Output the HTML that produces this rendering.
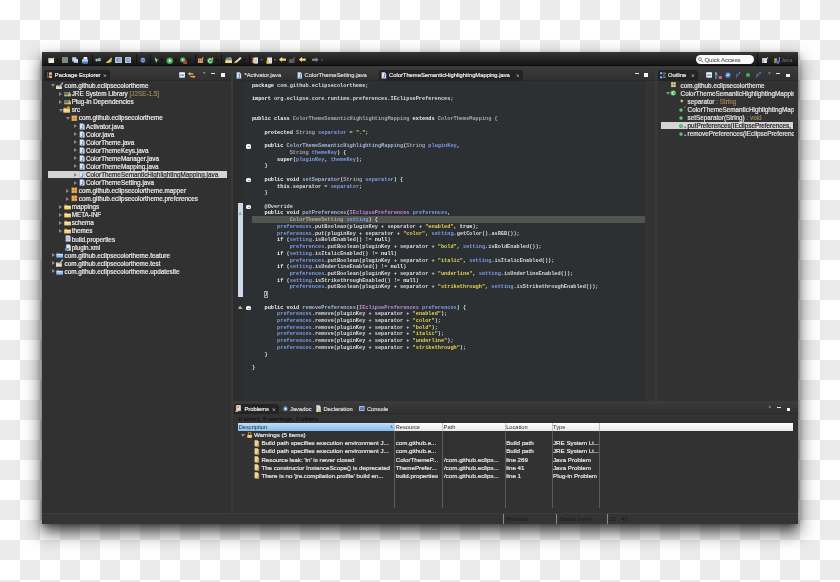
<!DOCTYPE html>
<html><head><meta charset="utf-8"><title>Eclipse</title><style>
*{box-sizing:border-box;margin:0;padding:0}
html,body{width:840px;height:582px;overflow:hidden}
body{position:relative;font-family:"Liberation Sans",sans-serif;background:conic-gradient(#ebebeb 25%,#fff 0 50%,#ebebeb 0 75%,#fff 0) 0 0/40px 40px}
#win{position:absolute;left:42.2px;top:52.3px;width:755.7px;height:471.2px;background:#3a3a3a;box-shadow:0 9px 16px 2px rgba(0,0,0,.5),0 2px 5px rgba(0,0,0,.3),0 9px 10px -3px rgba(0,0,0,.35)}
.layer{position:absolute;left:0;top:0;width:840px;height:582px;will-change:transform}
.r{position:absolute}
i.ic,i.arr{position:absolute;display:block;width:0;height:0}
i.ic{width:5px;height:5px}
.tt{position:absolute;font-size:6.35px;line-height:9px;white-space:nowrap;-webkit-text-stroke:0.2px currentColor}
.sel{position:absolute;background:#d4d4d4}
.cl{position:absolute;left:251.9px;font-weight:bold;font-family:"Liberation Mono",monospace;font-size:5.26px;line-height:6.8px;white-space:pre;color:#dadada}
.tab{position:absolute;font-size:5.8px;line-height:8px;white-space:nowrap;color:#ececec;-webkit-text-stroke:0.2px currentColor}

.pn{position:absolute;background:#323232}
.trow{position:absolute;background:linear-gradient(#3a3a3a,#333 60%,#313131);border-bottom:0.8px solid #2a2a2a}
.tabbg{position:absolute;background:#232323;border-radius:2.5px 2.5px 0 0}
.x{position:absolute;font-size:5.5px;line-height:6px;color:#d0d0d0;font-weight:bold}
.vm{position:absolute;width:3px;height:1.8px;background:#9a9a9a;clip-path:polygon(0 0,100% 0,50% 100%)}
.mn{position:absolute;width:4px;height:1px;background:#e6e6e6}
.mx{position:absolute;width:3.8px;height:3.4px;background:#f4f4f4}
.tbi{position:absolute;display:block}
.dd{position:absolute;width:0;height:0;border-left:1.3px solid transparent;border-right:1.3px solid transparent;border-top:1.6px solid #c8c8c8}
.sep{position:absolute;width:0.8px;background:#2b2b2b}
.otx{position:absolute;font-size:6.35px;line-height:9px;white-space:nowrap;color:#e4e4e4;-webkit-text-stroke:0.2px currentColor}
.ptx{position:absolute;font-size:6.2px;line-height:8px;white-space:nowrap;color:#e6e6e6;-webkit-text-stroke:0.2px currentColor}
.colsep{position:absolute;width:0.9px;background:#5a5a5a}
</style></head><body>
<div id="win"></div>
<div class="layer">
<div class="r" style="left:42.20px;top:52.30px;width:755.70px;height:14.20px;background:linear-gradient(#3a3a3a,#2c2c2c 25%,#1e1e1e 70%,#161616 92%,#0c0c0c 92%)"></div>
<svg style="position:absolute;left:47.90px;top:56.50px;width:6.90px;height:6.50px;" viewBox="0 0 16 16" preserveAspectRatio="none"><rect x="1" y="3" width="13" height="12" fill="#f2f0e4"/><rect x="1" y="3" width="6" height="5" fill="#bcd4ee"/><path d="M12 0l1.2 2.8L16 3.5l-2.8 1.2L12 8l-1.2-3.3L8 3.5l2.8-.7z" fill="#f0c840"/></svg>
<i class="tbi" style="left:56.20px;top:59.20px;width:2.60px;height:1.80px;background:#0a0a0a;clip-path:polygon(0 0,100% 0,50% 100%)"></i>
<svg style="position:absolute;left:61.90px;top:56.80px;width:6.60px;height:6.20px;" viewBox="0 0 16 16" preserveAspectRatio="none"><rect x="0.5" y="0.5" width="15" height="15" fill="#858585" stroke="#9a9a9a"/></svg>
<svg style="position:absolute;left:71.70px;top:56.50px;width:6.60px;height:6.80px;" viewBox="0 0 16 16" preserveAspectRatio="none"><rect x="0.5" y="0.5" width="10" height="10" fill="#c8d8ec"/><rect x="5" y="5" width="10.5" height="10.5" fill="#e8eef6" stroke="#8aa4c8"/><rect x="7" y="10" width="6" height="4" fill="#9ab4d8"/></svg>
<svg style="position:absolute;left:81.60px;top:56.50px;width:6.80px;height:7.00px;" viewBox="0 0 16 16" preserveAspectRatio="none"><path d="M4 0h8l1 6H3z" fill="#f2f2f2"/><path d="M0 6h16v8H0z" fill="#7ea4d8"/><path d="M0 6h16v3H0z" fill="#c4d8f0"/><rect x="3" y="12" width="10" height="4" fill="#3f6fb8"/></svg>
<i class="sep" style="left:92.10px;top:53.50px;width:0.80px;height:12.50px;background:#121212"></i>
<svg style="position:absolute;left:95.40px;top:56.80px;width:6.60px;height:6.00px;" viewBox="0 0 16 16" preserveAspectRatio="none"><path d="M0 8l5-5v3h3v4H5v3z" fill="#b8c8d8"/><circle cx="11" cy="7" r="4.5" fill="#47a556"/><path d="M13 5a3 3 0 1 0 0 4" stroke="#e8ffe8" stroke-width="1.6" fill="none"/></svg>
<svg style="position:absolute;left:105.00px;top:56.80px;width:7.00px;height:6.60px;" viewBox="0 0 16 16" preserveAspectRatio="none"><path d="M1 15L15 1v10q-4 4-14 4z" fill="#e8cf5a"/><path d="M15 1v6L5 13z" fill="#c8c070"/></svg>
<svg style="position:absolute;left:115.00px;top:57.00px;width:7.00px;height:6.40px;" viewBox="0 0 16 16" preserveAspectRatio="none"><rect x="0.5" y="0.5" width="15" height="15" fill="#e4ecf7"/><rect x="3" y="2.5" width="10" height="11" fill="#6e93c9"/><path d="M9.5 4v6q0 2-2 2" stroke="#dfe8f6" stroke-width="1.4" fill="none"/></svg>
<svg style="position:absolute;left:124.80px;top:57.00px;width:6.60px;height:6.40px;" viewBox="0 0 16 16" preserveAspectRatio="none"><rect x="0.5" y="0.5" width="15" height="15" fill="#e4ecf7"/><rect x="3" y="2.5" width="10" height="11" fill="#6e93c9"/><path d="M6 5h5M6 8h5" stroke="#dfe8f6" stroke-width="1.4"/></svg>
<i class="sep" style="left:136.00px;top:53.50px;width:0.80px;height:12.50px;background:#121212"></i>
<svg style="position:absolute;left:139.50px;top:56.80px;width:6.20px;height:6.60px;" viewBox="0 0 16 16" preserveAspectRatio="none"><circle cx="7.5" cy="8" r="6" fill="#8db3e8"/><ellipse cx="7.5" cy="8" rx="6" ry="3" fill="#4e7cc4"/><path d="M12 12l4 4" stroke="#3a5a90" stroke-width="1.5"/></svg>
<i class="sep" style="left:150.00px;top:53.50px;width:0.80px;height:12.50px;background:#121212"></i>
<svg style="position:absolute;left:153.80px;top:57.00px;width:5.70px;height:6.40px;" viewBox="0 0 16 16" preserveAspectRatio="none"><path d="M2 1l13 7-6 1-3 6z" fill="#58a068"/><path d="M2 1l6 5-2 9z" fill="#a8d8b0"/></svg>
<i class="tbi" style="left:160.60px;top:59.20px;width:2.60px;height:1.80px;background:#0a0a0a;clip-path:polygon(0 0,100% 0,50% 100%)"></i>
<svg style="position:absolute;left:165.70px;top:56.50px;width:7.60px;height:7.30px;" viewBox="0 0 16 16" preserveAspectRatio="none"><circle cx="8" cy="8" r="7.5" fill="#2f7f3a"/><circle cx="8" cy="8" r="6" fill="#4fae5a"/><path d="M6 4l5 4-5 4z" fill="#f0fff0"/></svg>
<i class="tbi" style="left:174.40px;top:59.20px;width:2.60px;height:1.80px;background:#0a0a0a;clip-path:polygon(0 0,100% 0,50% 100%)"></i>
<svg style="position:absolute;left:179.50px;top:56.50px;width:7.60px;height:7.50px;" viewBox="0 0 16 16" preserveAspectRatio="none"><circle cx="6" cy="6" r="5.5" fill="#4aa856"/><path d="M4.5 3l3.5 3-3.5 3z" fill="#e8ffe8"/><path d="M7 10h9v6H7z" fill="#c83a3a"/><path d="M9 10v-2h5v2" stroke="#d86060" fill="none"/></svg>
<i class="tbi" style="left:188.20px;top:59.20px;width:2.60px;height:1.80px;background:#0a0a0a;clip-path:polygon(0 0,100% 0,50% 100%)"></i>
<i class="sep" style="left:194.60px;top:53.50px;width:0.80px;height:12.50px;background:#121212"></i>
<svg style="position:absolute;left:197.90px;top:57.20px;width:6.10px;height:6.10px;" viewBox="0 0 16 16" preserveAspectRatio="none"><rect x="0" y="4" width="13" height="12" fill="#e0a866"/><path d="M4 4v12M9 4v12M0 9h13" stroke="#8a5a2a" stroke-width="1"/><path d="M13 0l1 2 2 .5-2 1-1 2.5-1-2.5-2-1 2-.5z" fill="#f8e070"/></svg>
<svg style="position:absolute;left:207.00px;top:56.60px;width:7.00px;height:7.00px;" viewBox="0 0 16 16" preserveAspectRatio="none"><circle cx="7.5" cy="8.5" r="7" fill="#3b9a4c"/><path d="M10.5 6a4 4 0 1 0 0 5" stroke="#e0ffe0" stroke-width="2" fill="none"/><path d="M13 0l1 2 2 .5-2 1-1 2.5-1-2.5-2-1 2-.5z" fill="#f0d060"/></svg>
<i class="tbi" style="left:215.20px;top:59.20px;width:2.60px;height:1.80px;background:#0a0a0a;clip-path:polygon(0 0,100% 0,50% 100%)"></i>
<i class="sep" style="left:220.80px;top:53.50px;width:0.80px;height:12.50px;background:#121212"></i>
<svg style="position:absolute;left:224.60px;top:56.80px;width:7.40px;height:6.40px;" viewBox="0 0 16 16" preserveAspectRatio="none"><path d="M1 6h14v9H1z" fill="#e8b650"/><path d="M1 9h14v6H1z" fill="#f8d880"/><path d="M3 1h10l2 5H1z" fill="#6a86d6"/><path d="M8 1h5l2 5H8z" fill="#58b870"/></svg>
<svg style="position:absolute;left:234.00px;top:56.80px;width:7.70px;height:6.80px;" viewBox="0 0 16 16" preserveAspectRatio="none"><path d="M0 15l3-5L13 0l3 3L6 13z" fill="#efe2c8"/><path d="M0 15l3-5 3 3z" fill="#c8a870"/></svg>
<i class="tbi" style="left:242.70px;top:59.20px;width:2.60px;height:1.80px;background:#0a0a0a;clip-path:polygon(0 0,100% 0,50% 100%)"></i>
<i class="sep" style="left:248.60px;top:53.50px;width:0.80px;height:12.50px;background:#121212"></i>
<svg style="position:absolute;left:251.70px;top:56.60px;width:6.70px;height:7.00px;" viewBox="0 0 16 16" preserveAspectRatio="none"><rect x="4" y="1" width="11" height="14" fill="#dfe6f0"/><path d="M6 5h7M6 8h7M6 11h7" stroke="#9ab0cc"/><circle cx="3.5" cy="4" r="2.5" fill="#f2c23e"/><path d="M1 7h5v6H1z" fill="#f2c23e"/></svg>
<i class="tbi" style="left:260.40px;top:59.20px;width:2.60px;height:1.80px;background:#707070;clip-path:polygon(0 0,100% 0,50% 100%)"></i>
<svg style="position:absolute;left:265.50px;top:56.60px;width:6.70px;height:7.00px;" viewBox="0 0 16 16" preserveAspectRatio="none"><rect x="3" y="1" width="12" height="14" fill="#dfe6f0"/><path d="M1 8h6v7H1z" fill="#f2c23e"/><path d="M4 3v12" stroke="#f2c23e" stroke-width="2.5"/></svg>
<i class="tbi" style="left:273.50px;top:59.20px;width:2.60px;height:1.80px;background:#707070;clip-path:polygon(0 0,100% 0,50% 100%)"></i>
<svg style="position:absolute;left:279.00px;top:57.40px;width:7.20px;height:5.40px;" viewBox="0 0 16 16" preserveAspectRatio="none"><path d="M0 8l7-7v4h9v6H7v4z" fill="#f5d660"/><path d="M0 8l7-7v4h9v2H6z" fill="#fff0b0"/></svg>
<svg style="position:absolute;left:289.00px;top:57.00px;width:6.70px;height:6.40px;" viewBox="0 0 16 16" preserveAspectRatio="none"><rect x="0" y="5" width="13" height="11" fill="#5e5e5e"/><path d="M12 0l1 2 2.5.5-2.5 1-1 2.5-1-2.5L8.5 2.5 11 2z" fill="#808080"/></svg>
<svg style="position:absolute;left:299.00px;top:57.40px;width:6.70px;height:5.40px;" viewBox="0 0 16 16" preserveAspectRatio="none"><path d="M0 8l7-7v4h9v6H7v4z" fill="#f5d660"/><path d="M0 8l7-7v4h9v2H6z" fill="#fff0b0"/></svg>
<i class="tbi" style="left:307.30px;top:59.20px;width:2.60px;height:1.80px;background:#0a0a0a;clip-path:polygon(0 0,100% 0,50% 100%)"></i>
<svg style="position:absolute;left:312.40px;top:57.40px;width:6.60px;height:5.40px;" viewBox="0 0 16 16" preserveAspectRatio="none"><path d="M16 8L9 1v4H0v6h9v4z" fill="#8a8a8a"/></svg>
<i class="tbi" style="left:320.70px;top:59.20px;width:2.60px;height:1.80px;background:#6a6a6a;clip-path:polygon(0 0,100% 0,50% 100%)"></i>
<div class="r" style="left:695.90px;top:55.20px;width:58.30px;height:8.90px;background:#fafafa;border-radius:4.5px"></div>
<svg style="position:absolute;left:698.30px;top:57.00px;width:5.50px;height:5.80px;" viewBox="0 0 16 16" preserveAspectRatio="none"><circle cx="6" cy="6" r="4.3" stroke="#555" stroke-width="1.8" fill="none"/><path d="M9.2 9.2L15 15" stroke="#555" stroke-width="2.2"/></svg>
<div class="r" style="left:704.4px;top:55.8px;font-size:6px;line-height:8.5px;color:#6a6a6a;white-space:nowrap;-webkit-text-stroke:0.15px #6a6a6a">Quick Access</div>
<i class="sep" style="left:757.20px;top:52.50px;width:0.90px;height:14.00px;background:#0e0e0e"></i>
<svg style="position:absolute;left:762.00px;top:57.00px;width:6.60px;height:6.20px;" viewBox="0 0 16 16" preserveAspectRatio="none"><rect x="0" y="3" width="12" height="13" fill="#dfe6f0"/><rect x="1" y="6" width="4" height="9" fill="#8fb0e0"/><path d="M13 0l1 2 2 .5-2 1-1 2.5-1-2.5-2-1 2-.5z" fill="#f8d860"/></svg>
<svg style="position:absolute;left:773.80px;top:56.60px;width:6.60px;height:7.00px;" viewBox="0 0 16 16" preserveAspectRatio="none"><rect x="1" y="3" width="6" height="6" fill="#d8a850"/><rect x="0" y="8" width="7" height="6" fill="#52a866"/><circle cx="9.5" cy="12" r="4" fill="#6a5ac0"/><path d="M13 0v8q0 2-2 2" stroke="#90b8f0" stroke-width="2" fill="none"/></svg>
<div class="r" style="left:781.2px;top:56px;font-size:5.3px;line-height:8px;color:#707070;white-space:nowrap">Java</div>
<div class="pn" style="left:42.40px;top:69.00px;width:188.60px;height:444.00px;background:#313131;border-radius:0 3px 0 0"></div>
<div class="trow" style="left:42.40px;top:69.00px;width:188.60px;height:11.90px;border-radius:0 3px 0 0"></div>
<div class="pn" style="left:233.20px;top:69.00px;width:421.60px;height:331.80px;border-radius:3px 3px 0 0"></div>
<div class="trow" style="left:233.20px;top:69.00px;width:421.60px;height:11.90px;border-radius:3px 3px 0 0"></div>
<div class="r" style="left:233.20px;top:80.90px;width:9.80px;height:319.90px;background:#2e2d2d"></div>
<div class="r" style="left:243.00px;top:80.90px;width:402.00px;height:319.90px;background:#2c3033"></div>
<div class="r" style="left:645.00px;top:80.90px;width:9.80px;height:319.90px;background:#333"></div>
<div class="pn" style="left:657.00px;top:69.00px;width:140.90px;height:331.80px;border-radius:3px 0 0 0"></div>
<div class="trow" style="left:657.00px;top:69.00px;width:140.90px;height:11.90px;border-radius:3px 0 0 0"></div>
<div class="pn" style="left:233.20px;top:403.20px;width:564.70px;height:109.80px;border-radius:3px 0 0 0"></div>
<div class="trow" style="left:233.20px;top:403.20px;width:564.70px;height:11.00px;border-radius:3px 0 0 0"></div>
<div class="r" style="left:42.20px;top:513.00px;width:755.70px;height:10.50px;background:#343434;border-top:0.8px solid #3e3e3e"></div>
<i class="tbi" style="left:503.10px;top:514.00px;width:0.90px;height:9.50px;background:#8a8a8a"></i>
<i class="tbi" style="left:556.40px;top:514.00px;width:0.90px;height:9.50px;background:#8a8a8a"></i>
<i class="tbi" style="left:606.80px;top:514.00px;width:0.90px;height:9.50px;background:#8a8a8a"></i>
<div class="r" style="left:505.7px;top:515px;font-size:6.1px;line-height:8px;color:#1c1c1c;white-space:nowrap">Writable</div>
<div class="r" style="left:559.2px;top:515px;font-size:6.1px;line-height:8px;color:#1c1c1c;white-space:nowrap">Smart Insert</div>
<div class="r" style="left:609.5px;top:515px;font-size:6.1px;line-height:8px;color:#1c1c1c;white-space:nowrap">21 : 41</div>
<div class="tabbg" style="left:44.30px;top:70.00px;width:65.70px;height:10.90px;"></div>
<svg style="position:absolute;left:46.80px;top:72.00px;width:5.60px;height:6.40px;" viewBox="0 0 16 16" preserveAspectRatio="none"><path d="M1.2 0v16" stroke="#8a8a8a" stroke-width="1.6"/><rect x="5" y="0.5" width="10" height="7" rx="2" fill="#c89a6a"/><rect x="5" y="8.5" width="10" height="7" rx="2" fill="#c89a6a"/><rect x="7" y="2" width="6" height="4" fill="#e0c0a0"/><rect x="7" y="10" width="6" height="4" fill="#e0c0a0"/></svg>
<div class="tab" style="left:54.8px;top:71.2px">Package Explorer</div>
<svg style="position:absolute;left:103.10px;top:73.70px;width:3.80px;height:3.40px;" viewBox="0 0 16 16" preserveAspectRatio="none"><path d="M2 2L14 14M14 2L2 14" stroke="#e4e4e4" stroke-width="2.6"/></svg>
<svg style="position:absolute;left:178.90px;top:72.00px;width:6.20px;height:6.00px;" viewBox="0 0 16 16" preserveAspectRatio="none"><rect x="0.5" y="0.5" width="15" height="15" rx="2" fill="#dce8f6"/><rect x="3" y="7" width="10" height="2.6" fill="#4a78b8"/><path d="M1 3h14" stroke="#f8fbff" stroke-width="2"/></svg>
<svg style="position:absolute;left:188.00px;top:72.00px;width:7.50px;height:6.60px;" viewBox="0 0 16 16" preserveAspectRatio="none"><path d="M0 4.5L4.5 0v3H11v3H4.5v3z" fill="#f0c850"/><path d="M16 11.5L11.5 7v3H5v3h6.5v3z" fill="#e8b038"/></svg>
<i class="vm" style="left:202.70px;top:72.20px"></i><i class="mn" style="left:211.00px;top:73.20px"></i><i class="mx" style="left:221.00px;top:73.30px"></i>
<svg style="position:absolute;left:236.40px;top:71.80px;width:5.80px;height:6.80px;" viewBox="0 0 16 16" preserveAspectRatio="none"><path d="M2 0.5h8l4 4V15.5H2z" fill="#e3eaf3" stroke="#7d95b8" stroke-width="1"/><path d="M9.5 4v7.5q0 2-2 2h-2" stroke="#3a6fc4" stroke-width="2.2" fill="none"/></svg>
<div class="tab" style="left:244.4px;top:71.2px;color:#dcdcdc">*Activator.java</div>
<svg style="position:absolute;left:296.60px;top:71.80px;width:5.80px;height:6.80px;" viewBox="0 0 16 16" preserveAspectRatio="none"><path d="M2 0.5h8l4 4V15.5H2z" fill="#e3eaf3" stroke="#7d95b8" stroke-width="1"/><path d="M9.5 4v7.5q0 2-2 2h-2" stroke="#3a6fc4" stroke-width="2.2" fill="none"/></svg>
<div class="tab" style="left:304.6px;top:71.2px;color:#dcdcdc">ColorThemeSetting.java</div>
<div class="tabbg" style="left:379.30px;top:70.00px;width:143.40px;height:10.90px;"></div>
<svg style="position:absolute;left:381.40px;top:71.80px;width:5.80px;height:6.80px;" viewBox="0 0 16 16" preserveAspectRatio="none"><path d="M2 0.5h8l4 4V15.5H2z" fill="#e3eaf3" stroke="#7d95b8" stroke-width="1"/><path d="M9.5 4v7.5q0 2-2 2h-2" stroke="#3a6fc4" stroke-width="2.2" fill="none"/></svg>
<div class="tab" style="left:389px;top:71.2px">ColorThemeSemanticHighlightingMapping.java</div>
<svg style="position:absolute;left:515.70px;top:73.70px;width:3.80px;height:3.40px;" viewBox="0 0 16 16" preserveAspectRatio="none"><path d="M2 2L14 14M14 2L2 14" stroke="#e4e4e4" stroke-width="2.6"/></svg>
<i class="mn" style="left:634.5px;top:73.4px"></i><i class="mx" style="left:644.2px;top:73.4px"></i>
<div class="tabbg" style="left:657.60px;top:70.00px;width:40.00px;height:10.90px;"></div>
<svg style="position:absolute;left:659.70px;top:72.00px;width:6.10px;height:6.50px;" viewBox="0 0 16 16" preserveAspectRatio="none"><rect x="0" y="0" width="6" height="6" fill="#4a8ad8"/><rect x="0" y="10" width="6" height="6" fill="#4a8ad8"/><rect x="1.5" y="1.5" width="3" height="3" fill="#bcd8f8"/><rect x="1.5" y="11.5" width="3" height="3" fill="#bcd8f8"/><path d="M8 3h8M8 8h5M8 13h8" stroke="#d8e4f0" stroke-width="1.6"/></svg>
<div class="tab" style="left:667.9px;top:71.2px">Outline</div>
<svg style="position:absolute;left:690.90px;top:73.70px;width:3.80px;height:3.40px;" viewBox="0 0 16 16" preserveAspectRatio="none"><path d="M2 2L14 14M14 2L2 14" stroke="#e4e4e4" stroke-width="2.6"/></svg>
</div>
<div class="layer" style="clip-path:inset(81px 609px 89px 43px)">
<i class="arr" style="left:51.3px;top:84.3px;border-left:2px solid transparent;border-right:2px solid transparent;border-top:3px solid #8a8a8a"></i>
<svg class="sv" style="position:absolute;left:55.70px;top:81.70px;width:7.6px;height:7.6px" viewBox="0 0 16 16"><path d="M0 7h5l1 1h6v8H0z" fill="#c9a560"/><path d="M0 9h12v7H0z" fill="#efdcae"/><path d="M6 11L15 1" stroke="#86b2ee" stroke-width="3"/><path d="M6 11l-1 2 2-1z" fill="#fff"/></svg>
<div class="tt" style="left:64.5px;top:81.20px;color:#ececec">com.github.eclipsecolortheme</div>
<i class="arr" style="left:59.3px;top:91.8px;border-top:2px solid transparent;border-bottom:2px solid transparent;border-left:3px solid #8a8a8a"></i>
<svg class="sv" style="position:absolute;left:63.90px;top:90.17px;width:7.4px;height:7.2px" viewBox="0 0 16 16"><rect x="0" y="5" width="11" height="3.5" fill="#48a7bf"/><rect x="0" y="8.5" width="11" height="1.5" fill="#2a5a70"/><rect x="0" y="10" width="11" height="4" fill="#e0a449"/><path d="M9 14L12.5 3 16 14z" fill="#f2c44c"/></svg>
<div class="tt" style="left:71.7px;top:89.27px;color:#ececec">JRE System Library<span style="color:#9c8456"> [J2SE-1.5]</span></div>
<i class="arr" style="left:59.3px;top:99.8px;border-top:2px solid transparent;border-bottom:2px solid transparent;border-left:3px solid #8a8a8a"></i>
<svg class="sv" style="position:absolute;left:63.90px;top:98.24px;width:7.4px;height:7.2px" viewBox="0 0 16 16"><rect x="0" y="5" width="11" height="3.5" fill="#48a7bf"/><rect x="0" y="8.5" width="11" height="1.5" fill="#2a5a70"/><rect x="0" y="10" width="11" height="4" fill="#e0a449"/><path d="M9 14L12.5 3 16 14z" fill="#f2c44c"/></svg>
<div class="tt" style="left:71.7px;top:97.34px;color:#ececec">Plug-in Dependencies</div>
<i class="arr" style="left:58.5px;top:108.5px;border-left:2px solid transparent;border-right:2px solid transparent;border-top:3px solid #8a8a8a"></i>
<svg class="sv" style="position:absolute;left:63.30px;top:106.11px;width:7.4px;height:7.4px" viewBox="0 0 16 16"><path d="M1 4h5l1.5 1.5H15V14H1z" fill="#d9a94a"/><path d="M1 7h14v7H1z" fill="#f3d58a"/><path d="M1 7h14v1.5H1z" fill="#fff1c8"/><rect x="8" y="1" width="7" height="6" fill="#b07a3a"/><path d="M11.5 1v6M8 4h7" stroke="#f0c070" stroke-width="1"/></svg>
<div class="tt" style="left:71.7px;top:105.41px;color:#ececec">src</div>
<i class="arr" style="left:65.6px;top:116.6px;border-left:2px solid transparent;border-right:2px solid transparent;border-top:3px solid #8a8a8a"></i>
<svg class="sv" style="position:absolute;left:71.20px;top:114.58px;width:6.6px;height:6.6px" viewBox="0 0 16 16"><rect x="1" y="1" width="14" height="14" fill="#a8672e"/><rect x="2" y="2" width="5.5" height="5.5" fill="#f0b45e"/><rect x="8.5" y="2" width="5.5" height="5.5" fill="#f0b45e"/><rect x="2" y="8.5" width="5.5" height="5.5" fill="#f0b45e"/><rect x="8.5" y="8.5" width="5.5" height="5.5" fill="#f0b45e"/></svg>
<div class="tt" style="left:78.8px;top:113.48px;color:#ececec">com.github.eclipsecolortheme</div>
<i class="arr" style="left:73.6px;top:124.1px;border-top:2px solid transparent;border-bottom:2px solid transparent;border-left:3px solid #8a8a8a"></i>
<svg class="sv" style="position:absolute;left:78.80px;top:122.55px;width:6.4px;height:7px" viewBox="0 0 16 16"><path d="M2 0.5h8l4 4V15.5H2z" fill="#e3eaf3" stroke="#7d95b8" stroke-width="1"/><path d="M9.5 4v7.5q0 2-2 2h-2" stroke="#3a6fc4" stroke-width="2.2" fill="none"/></svg>
<div class="tt" style="left:86.0px;top:121.55px;color:#ececec">Activator.java</div>
<i class="arr" style="left:73.6px;top:132.1px;border-top:2px solid transparent;border-bottom:2px solid transparent;border-left:3px solid #8a8a8a"></i>
<svg class="sv" style="position:absolute;left:78.80px;top:130.62px;width:6.4px;height:7px" viewBox="0 0 16 16"><path d="M2 0.5h8l4 4V15.5H2z" fill="#e3eaf3" stroke="#7d95b8" stroke-width="1"/><path d="M9.5 4v7.5q0 2-2 2h-2" stroke="#3a6fc4" stroke-width="2.2" fill="none"/></svg>
<div class="tt" style="left:86.0px;top:129.62px;color:#ececec">Color.java</div>
<i class="arr" style="left:73.6px;top:140.2px;border-top:2px solid transparent;border-bottom:2px solid transparent;border-left:3px solid #8a8a8a"></i>
<svg class="sv" style="position:absolute;left:78.80px;top:138.69px;width:6.4px;height:7px" viewBox="0 0 16 16"><path d="M2 0.5h8l4 4V15.5H2z" fill="#e3eaf3" stroke="#7d95b8" stroke-width="1"/><path d="M9.5 4v7.5q0 2-2 2h-2" stroke="#3a6fc4" stroke-width="2.2" fill="none"/></svg>
<div class="tt" style="left:86.0px;top:137.69px;color:#ececec">ColorTheme.java</div>
<i class="arr" style="left:73.6px;top:148.3px;border-top:2px solid transparent;border-bottom:2px solid transparent;border-left:3px solid #8a8a8a"></i>
<svg class="sv" style="position:absolute;left:78.80px;top:146.76px;width:6.4px;height:7px" viewBox="0 0 16 16"><path d="M2 0.5h8l4 4V15.5H2z" fill="#e3eaf3" stroke="#7d95b8" stroke-width="1"/><path d="M9.5 4v7.5q0 2-2 2h-2" stroke="#3a6fc4" stroke-width="2.2" fill="none"/></svg>
<div class="tt" style="left:86.0px;top:145.76px;color:#ececec">ColorThemeKeys.java</div>
<i class="arr" style="left:73.6px;top:156.3px;border-top:2px solid transparent;border-bottom:2px solid transparent;border-left:3px solid #8a8a8a"></i>
<svg class="sv" style="position:absolute;left:78.80px;top:154.83px;width:6.4px;height:7px" viewBox="0 0 16 16"><path d="M2 0.5h8l4 4V15.5H2z" fill="#e3eaf3" stroke="#7d95b8" stroke-width="1"/><path d="M9.5 4v7.5q0 2-2 2h-2" stroke="#3a6fc4" stroke-width="2.2" fill="none"/></svg>
<div class="tt" style="left:86.0px;top:153.83px;color:#ececec">ColorThemeManager.java</div>
<i class="arr" style="left:73.6px;top:164.4px;border-top:2px solid transparent;border-bottom:2px solid transparent;border-left:3px solid #8a8a8a"></i>
<svg class="sv" style="position:absolute;left:78.80px;top:162.90px;width:6.4px;height:7px" viewBox="0 0 16 16"><path d="M2 0.5h8l4 4V15.5H2z" fill="#e3eaf3" stroke="#7d95b8" stroke-width="1"/><path d="M9.5 4v7.5q0 2-2 2h-2" stroke="#3a6fc4" stroke-width="2.2" fill="none"/></svg>
<div class="tt" style="left:86.0px;top:161.90px;color:#ececec">ColorThemeMapping.java</div>
<div class="sel" style="left:48px;top:170.57px;width:179px;height:7.6px"></div>
<i class="arr" style="left:73.6px;top:172.5px;border-top:2px solid transparent;border-bottom:2px solid transparent;border-left:3px solid #8a8a8a"></i>
<svg class="sv" style="position:absolute;left:78.80px;top:170.97px;width:6.4px;height:7px" viewBox="0 0 16 16"><path d="M2 0.5h8l4 4V15.5H2z" fill="#e3eaf3" stroke="#7d95b8" stroke-width="1"/><path d="M9.5 4v7.5q0 2-2 2h-2" stroke="#3a6fc4" stroke-width="2.2" fill="none"/></svg>
<div class="tt" style="left:86.0px;top:169.97px;color:#2a2a2a">ColorThemeSemanticHighlightingMapping.java</div>
<i class="arr" style="left:73.6px;top:180.5px;border-top:2px solid transparent;border-bottom:2px solid transparent;border-left:3px solid #8a8a8a"></i>
<svg class="sv" style="position:absolute;left:78.80px;top:179.04px;width:6.4px;height:7px" viewBox="0 0 16 16"><path d="M2 0.5h8l4 4V15.5H2z" fill="#e3eaf3" stroke="#7d95b8" stroke-width="1"/><path d="M9.5 4v7.5q0 2-2 2h-2" stroke="#3a6fc4" stroke-width="2.2" fill="none"/></svg>
<div class="tt" style="left:86.0px;top:178.04px;color:#ececec">ColorThemeSetting.java</div>
<i class="arr" style="left:66.4px;top:188.6px;border-top:2px solid transparent;border-bottom:2px solid transparent;border-left:3px solid #8a8a8a"></i>
<svg class="sv" style="position:absolute;left:71.20px;top:187.21px;width:6.6px;height:6.6px" viewBox="0 0 16 16"><rect x="1" y="1" width="14" height="14" fill="#a8672e"/><rect x="2" y="2" width="5.5" height="5.5" fill="#f0b45e"/><rect x="8.5" y="2" width="5.5" height="5.5" fill="#f0b45e"/><rect x="2" y="8.5" width="5.5" height="5.5" fill="#f0b45e"/><rect x="8.5" y="8.5" width="5.5" height="5.5" fill="#f0b45e"/></svg>
<div class="tt" style="left:78.8px;top:186.11px;color:#ececec">com.github.eclipsecolortheme.mapper</div>
<i class="arr" style="left:66.4px;top:196.7px;border-top:2px solid transparent;border-bottom:2px solid transparent;border-left:3px solid #8a8a8a"></i>
<svg class="sv" style="position:absolute;left:71.20px;top:195.28px;width:6.6px;height:6.6px" viewBox="0 0 16 16"><rect x="1" y="1" width="14" height="14" fill="#a8672e"/><rect x="2" y="2" width="5.5" height="5.5" fill="#f0b45e"/><rect x="8.5" y="2" width="5.5" height="5.5" fill="#f0b45e"/><rect x="2" y="8.5" width="5.5" height="5.5" fill="#f0b45e"/><rect x="8.5" y="8.5" width="5.5" height="5.5" fill="#f0b45e"/></svg>
<div class="tt" style="left:78.8px;top:194.18px;color:#ececec">com.github.eclipsecolortheme.preferences</div>
<i class="arr" style="left:59.3px;top:204.8px;border-top:2px solid transparent;border-bottom:2px solid transparent;border-left:3px solid #8a8a8a"></i>
<svg class="sv" style="position:absolute;left:63.50px;top:203.15px;width:7.2px;height:7.2px" viewBox="0 0 16 16"><path d="M1 4h5l1.5 1.5H15V14H1z" fill="#d9a94a"/><path d="M1 7h14v7H1z" fill="#f3d58a"/><path d="M1 7h14v1.5H1z" fill="#fff1c8"/></svg>
<div class="tt" style="left:71.7px;top:202.25px;color:#ececec">mappings</div>
<i class="arr" style="left:59.3px;top:212.8px;border-top:2px solid transparent;border-bottom:2px solid transparent;border-left:3px solid #8a8a8a"></i>
<svg class="sv" style="position:absolute;left:63.50px;top:211.22px;width:7.2px;height:7.2px" viewBox="0 0 16 16"><path d="M1 4h5l1.5 1.5H15V14H1z" fill="#d9a94a"/><path d="M1 7h14v7H1z" fill="#f3d58a"/><path d="M1 7h14v1.5H1z" fill="#fff1c8"/></svg>
<div class="tt" style="left:71.7px;top:210.32px;color:#ececec">META-INF</div>
<i class="arr" style="left:59.3px;top:220.9px;border-top:2px solid transparent;border-bottom:2px solid transparent;border-left:3px solid #8a8a8a"></i>
<svg class="sv" style="position:absolute;left:63.50px;top:219.29px;width:7.2px;height:7.2px" viewBox="0 0 16 16"><path d="M1 4h5l1.5 1.5H15V14H1z" fill="#d9a94a"/><path d="M1 7h14v7H1z" fill="#f3d58a"/><path d="M1 7h14v1.5H1z" fill="#fff1c8"/></svg>
<div class="tt" style="left:71.7px;top:218.39px;color:#ececec">schema</div>
<i class="arr" style="left:59.3px;top:229.0px;border-top:2px solid transparent;border-bottom:2px solid transparent;border-left:3px solid #8a8a8a"></i>
<svg class="sv" style="position:absolute;left:63.50px;top:227.36px;width:7.2px;height:7.2px" viewBox="0 0 16 16"><path d="M1 4h5l1.5 1.5H15V14H1z" fill="#d9a94a"/><path d="M1 7h14v7H1z" fill="#f3d58a"/><path d="M1 7h14v1.5H1z" fill="#fff1c8"/></svg>
<div class="tt" style="left:71.7px;top:226.46px;color:#ececec">themes</div>
<svg class="sv" style="position:absolute;left:64.70px;top:235.43px;width:6.4px;height:7.2px" viewBox="0 0 16 16"><path d="M2 0.5h9l3 3V15.5H2z" fill="#dfe6ee" stroke="#8aa0b8" stroke-width="1"/><path d="M4 5h8M4 8h8M4 11h8" stroke="#7088a8" stroke-width="1.2"/></svg>
<div class="tt" style="left:71.7px;top:234.53px;color:#ececec">build.properties</div>
<svg class="sv" style="position:absolute;left:64.50px;top:243.50px;width:6.6px;height:7.2px" viewBox="0 0 16 16"><path d="M3 0.5h8l3 3V15.5H3z" fill="#e6edf6" stroke="#8aa0b8" stroke-width="1"/><path d="M0 9h10v6H0z" fill="#5a90d8"/><path d="M9 7h5v5H9z" fill="#f0c050"/></svg>
<div class="tt" style="left:71.7px;top:242.60px;color:#ececec">plugin.xml</div>
<i class="arr" style="left:52.1px;top:253.2px;border-top:2px solid transparent;border-bottom:2px solid transparent;border-left:3px solid #8a8a8a"></i>
<svg class="sv" style="position:absolute;left:55.70px;top:251.37px;width:7.4px;height:7.4px" viewBox="0 0 16 16"><path d="M1 4h5l1.5 1.5H15V14H1z" fill="#4d86cc"/><path d="M1 7h14v7H1z" fill="#8fbcf0"/><path d="M1 7h14v2H1z" fill="#e8f2ff"/></svg>
<div class="tt" style="left:64.5px;top:250.67px;color:#ececec">com.github.eclipsecolortheme.feature</div>
<i class="arr" style="left:52.1px;top:261.2px;border-top:2px solid transparent;border-bottom:2px solid transparent;border-left:3px solid #8a8a8a"></i>
<svg class="sv" style="position:absolute;left:55.70px;top:259.24px;width:7.6px;height:7.6px" viewBox="0 0 16 16"><path d="M0 7h5l1 1h6v8H0z" fill="#c9a560"/><path d="M0 9h12v7H0z" fill="#efdcae"/><path d="M6 11L15 1" stroke="#86b2ee" stroke-width="3"/><path d="M6 11l-1 2 2-1z" fill="#fff"/></svg>
<div class="tt" style="left:64.5px;top:258.74px;color:#ececec">com.github.eclipsecolortheme.test</div>
<i class="arr" style="left:52.1px;top:269.3px;border-top:2px solid transparent;border-bottom:2px solid transparent;border-left:3px solid #8a8a8a"></i>
<svg class="sv" style="position:absolute;left:55.70px;top:267.51px;width:7.4px;height:7.4px" viewBox="0 0 16 16"><path d="M1 4h5l1.5 1.5H15V14H1z" fill="#4d86cc"/><path d="M1 7h14v7H1z" fill="#8fbcf0"/><path d="M1 7h14v2H1z" fill="#e8f2ff"/></svg>
<div class="tt" style="left:64.5px;top:266.81px;color:#ececec">com.github.eclipsecolortheme.updatesite</div>
</div>
<div class="layer" style="clip-path:inset(81px 185px 181px 233px)">
<div class="r" style="left:237.50px;top:202.90px;width:5.50px;height:94.10px;background:#cddaee"></div>
<i class="tbi" style="left:237.60px;top:211.60px;width:5.20px;height:3.80px;background:#86c886;clip-path:polygon(50% 0,100% 100%,0 100%);border-radius:1px"></i>
<i class="tbi" style="left:237.60px;top:305.40px;width:5.20px;height:3.80px;background:#86c886;clip-path:polygon(50% 0,100% 100%,0 100%);border-radius:1px"></i>
<i class="tbi" style="left:246.30px;top:144.28px;width:4.60px;height:4.60px;background:#eef1f6;border-radius:1.5px"></i>
<i class="tbi" style="left:247.50px;top:146.38px;width:2.20px;height:0.60px;background:#9aa0a8"></i>
<i class="tbi" style="left:246.30px;top:177.88px;width:4.60px;height:4.60px;background:#eef1f6;border-radius:1.5px"></i>
<i class="tbi" style="left:247.50px;top:179.98px;width:2.20px;height:0.60px;background:#9aa0a8"></i>
<i class="tbi" style="left:246.30px;top:204.76px;width:4.60px;height:4.60px;background:#eef1f6;border-radius:1.5px"></i>
<i class="tbi" style="left:247.50px;top:206.86px;width:2.20px;height:0.60px;background:#9aa0a8"></i>
<i class="tbi" style="left:246.30px;top:305.56px;width:4.60px;height:4.60px;background:#eef1f6;border-radius:1.5px"></i>
<i class="tbi" style="left:247.50px;top:307.66px;width:2.20px;height:0.60px;background:#9aa0a8"></i>
<div class="r" style="left:252.00px;top:216.20px;width:393.00px;height:6.80px;background:#53544f"></div>
<div class="r" style="left:264.30px;top:291.22px;width:3.60px;height:6.60px;border:0.7px solid #9a9a9a"></div>
<div class="cl" style="top:82.80px"><span style="color:#f0f0f0">package</span><span style="color:#dadada"> com.github.eclipsecolortheme;</span></div>
<div class="cl" style="top:96.24px"><span style="color:#f0f0f0">import</span><span style="color:#dadada"> org.eclipse.core.runtime.preferences.IEclipsePreferences;</span></div>
<div class="cl" style="top:116.40px"><span style="color:#f0f0f0">public</span><span style="color:#dadada"> </span><span style="color:#f0f0f0">class</span><span style="color:#a8a8a8"> ColorThemeSemanticHighlightingMapping </span><span style="color:#f0f0f0">extends</span><span style="color:#a8a8a8"> ColorThemeMapping {</span></div>
<div class="cl" style="top:129.84px"><span style="color:#dadada">    </span><span style="color:#f0f0f0">protected</span><span style="color:#a8a8a8"> String </span><span style="color:#7e9ee8">separator</span><span style="color:#dadada"> = </span><span style="color:#e8d44d">&quot;.&quot;</span><span style="color:#dadada">;</span></div>
<div class="cl" style="top:143.28px"><span style="color:#dadada">    </span><span style="color:#f0f0f0">public</span><span style="color:#dadada"> </span><span style="color:#a9b6de">ColorThemeSemanticHighlightingMapping</span><span style="color:#dadada">(</span><span style="color:#a8a8a8">String </span><span style="color:#7e9ee8">pluginKey</span><span style="color:#dadada">,</span></div>
<div class="cl" style="top:150.00px"><span style="color:#a8a8a8">            String </span><span style="color:#7e9ee8">themeKey</span><span style="color:#dadada">) {</span></div>
<div class="cl" style="top:156.72px"><span style="color:#dadada">        </span><span style="color:#f0f0f0">super</span><span style="color:#dadada">(</span><span style="color:#7e9ee8">pluginKey</span><span style="color:#dadada">, </span><span style="color:#7e9ee8">themeKey</span><span style="color:#dadada">);</span></div>
<div class="cl" style="top:163.44px"><span style="color:#dadada">    }</span></div>
<div class="cl" style="top:176.88px"><span style="color:#dadada">    </span><span style="color:#f0f0f0">public</span><span style="color:#dadada"> </span><span style="color:#f0f0f0">void</span><span style="color:#dadada"> </span><span style="color:#a9b6de">setSeparator</span><span style="color:#dadada">(</span><span style="color:#a8a8a8">String </span><span style="color:#7e9ee8">separator</span><span style="color:#dadada">) {</span></div>
<div class="cl" style="top:183.60px"><span style="color:#dadada">        </span><span style="color:#f0f0f0">this</span><span style="color:#dadada">.separator = </span><span style="color:#7e9ee8">separator</span><span style="color:#dadada">;</span></div>
<div class="cl" style="top:190.32px"><span style="color:#dadada">    }</span></div>
<div class="cl" style="top:203.76px"><span style="color:#dadada">    </span><span style="color:#d8d8d8">@Override</span></div>
<div class="cl" style="top:210.48px"><span style="color:#dadada">    </span><span style="color:#f0f0f0">public</span><span style="color:#dadada"> </span><span style="color:#f0f0f0">void</span><span style="color:#dadada"> </span><span style="color:#a9b6de">putPreferences</span><span style="color:#dadada">(</span><span style="color:#c08ad8">IEclipsePreferences</span><span style="color:#dadada"> </span><span style="color:#7e9ee8">preferences</span><span style="color:#dadada">,</span></div>
<div class="cl" style="top:217.20px"><span style="color:#a8a8a8">            ColorThemeSetting </span><span style="color:#7e9ee8">setting</span><span style="color:#dadada">) {</span></div>
<div class="cl" style="top:223.92px"><span style="color:#dadada">        </span><span style="color:#7e9ee8">preferences</span><span style="color:#dadada">.putBoolean(pluginKey + separator + </span><span style="color:#e8d44d">&quot;enabled&quot;</span><span style="color:#dadada">, </span><span style="color:#f0f0f0">true</span><span style="color:#dadada">);</span></div>
<div class="cl" style="top:230.64px"><span style="color:#dadada">        </span><span style="color:#7e9ee8">preferences</span><span style="color:#dadada">.put(pluginKey + separator + </span><span style="color:#e8d44d">&quot;color&quot;</span><span style="color:#dadada">, </span><span style="color:#7e9ee8">setting</span><span style="color:#dadada">.getColor().asRGB());</span></div>
<div class="cl" style="top:237.36px"><span style="color:#dadada">        </span><span style="color:#f0f0f0">if</span><span style="color:#dadada"> (</span><span style="color:#7e9ee8">setting</span><span style="color:#dadada">.isBoldEnabled() != </span><span style="color:#f0f0f0">null</span><span style="color:#dadada">)</span></div>
<div class="cl" style="top:244.08px"><span style="color:#dadada">            </span><span style="color:#7e9ee8">preferences</span><span style="color:#dadada">.putBoolean(pluginKey + separator + </span><span style="color:#e8d44d">&quot;bold&quot;</span><span style="color:#dadada">, </span><span style="color:#7e9ee8">setting</span><span style="color:#dadada">.isBoldEnabled());</span></div>
<div class="cl" style="top:250.80px"><span style="color:#dadada">        </span><span style="color:#f0f0f0">if</span><span style="color:#dadada"> (</span><span style="color:#7e9ee8">setting</span><span style="color:#dadada">.isItalicEnabled() != </span><span style="color:#f0f0f0">null</span><span style="color:#dadada">)</span></div>
<div class="cl" style="top:257.52px"><span style="color:#dadada">            </span><span style="color:#7e9ee8">preferences</span><span style="color:#dadada">.putBoolean(pluginKey + separator + </span><span style="color:#e8d44d">&quot;italic&quot;</span><span style="color:#dadada">, </span><span style="color:#7e9ee8">setting</span><span style="color:#dadada">.isItalicEnabled());</span></div>
<div class="cl" style="top:264.24px"><span style="color:#dadada">        </span><span style="color:#f0f0f0">if</span><span style="color:#dadada"> (</span><span style="color:#7e9ee8">setting</span><span style="color:#dadada">.isUnderlineEnabled() != </span><span style="color:#f0f0f0">null</span><span style="color:#dadada">)</span></div>
<div class="cl" style="top:270.96px"><span style="color:#dadada">            </span><span style="color:#7e9ee8">preferences</span><span style="color:#dadada">.putBoolean(pluginKey + separator + </span><span style="color:#e8d44d">&quot;underline&quot;</span><span style="color:#dadada">, </span><span style="color:#7e9ee8">setting</span><span style="color:#dadada">.isUnderlineEnabled());</span></div>
<div class="cl" style="top:277.68px"><span style="color:#dadada">        </span><span style="color:#f0f0f0">if</span><span style="color:#dadada"> (</span><span style="color:#7e9ee8">setting</span><span style="color:#dadada">.isStrikethroughEnabled() != </span><span style="color:#f0f0f0">null</span><span style="color:#dadada">)</span></div>
<div class="cl" style="top:284.40px"><span style="color:#dadada">            </span><span style="color:#7e9ee8">preferences</span><span style="color:#dadada">.putBoolean(pluginKey + separator + </span><span style="color:#e8d44d">&quot;strikethrough&quot;</span><span style="color:#dadada">, </span><span style="color:#7e9ee8">setting</span><span style="color:#dadada">.isStrikethroughEnabled());</span></div>
<div class="cl" style="top:291.12px"><span style="color:#dadada">    </span><span style="color:#dadada">}</span></div>
<div class="cl" style="top:304.56px"><span style="color:#dadada">    </span><span style="color:#f0f0f0">public</span><span style="color:#dadada"> </span><span style="color:#f0f0f0">void</span><span style="color:#dadada"> </span><span style="color:#a9b6de">removePreferences</span><span style="color:#dadada">(</span><span style="color:#c08ad8">IEclipsePreferences</span><span style="color:#dadada"> </span><span style="color:#7e9ee8">preferences</span><span style="color:#dadada">) {</span></div>
<div class="cl" style="top:311.28px"><span style="color:#dadada">        </span><span style="color:#7e9ee8">preferences</span><span style="color:#dadada">.remove(pluginKey + separator + </span><span style="color:#e8d44d">&quot;enabled&quot;</span><span style="color:#dadada">);</span></div>
<div class="cl" style="top:318.00px"><span style="color:#dadada">        </span><span style="color:#7e9ee8">preferences</span><span style="color:#dadada">.remove(pluginKey + separator + </span><span style="color:#e8d44d">&quot;color&quot;</span><span style="color:#dadada">);</span></div>
<div class="cl" style="top:324.72px"><span style="color:#dadada">        </span><span style="color:#7e9ee8">preferences</span><span style="color:#dadada">.remove(pluginKey + separator + </span><span style="color:#e8d44d">&quot;bold&quot;</span><span style="color:#dadada">);</span></div>
<div class="cl" style="top:331.44px"><span style="color:#dadada">        </span><span style="color:#7e9ee8">preferences</span><span style="color:#dadada">.remove(pluginKey + separator + </span><span style="color:#e8d44d">&quot;italic&quot;</span><span style="color:#dadada">);</span></div>
<div class="cl" style="top:338.16px"><span style="color:#dadada">        </span><span style="color:#7e9ee8">preferences</span><span style="color:#dadada">.remove(pluginKey + separator + </span><span style="color:#e8d44d">&quot;underline&quot;</span><span style="color:#dadada">);</span></div>
<div class="cl" style="top:344.88px"><span style="color:#dadada">        </span><span style="color:#7e9ee8">preferences</span><span style="color:#dadada">.remove(pluginKey + separator + </span><span style="color:#e8d44d">&quot;strikethrough&quot;</span><span style="color:#dadada">);</span></div>
<div class="cl" style="top:351.60px"><span style="color:#dadada">    }</span></div>
<div class="cl" style="top:365.04px"><span style="color:#dadada">}</span></div>
</div>
<div class="layer" style="clip-path:inset(69px 46.5px 181px 657px)">
<svg style="position:absolute;left:705.80px;top:72.20px;width:6.20px;height:6.00px;" viewBox="0 0 16 16" preserveAspectRatio="none"><rect x="0.5" y="0.5" width="15" height="15" rx="2" fill="#dce8f6"/><rect x="3" y="7" width="10" height="2.6" fill="#4a78b8"/><path d="M1 3h14" stroke="#f8fbff" stroke-width="2"/></svg>
<svg style="position:absolute;left:714.90px;top:71.80px;width:7.20px;height:7.00px;" viewBox="0 0 16 16" preserveAspectRatio="none"><rect x="0" y="0" width="4" height="16" fill="#3a8a8a"/><rect x="1" y="1" width="2" height="6" fill="#9ad0c8"/><rect x="8" y="9" width="8" height="7" fill="#b860a8"/><path d="M6 2v8" stroke="#6a7a8a" stroke-width="1.2"/></svg>
<svg style="position:absolute;left:725.40px;top:72.00px;width:5.90px;height:6.20px;" viewBox="0 0 16 16" preserveAspectRatio="none"><circle cx="8" cy="8" r="7.5" fill="#3a78c8"/><circle cx="8" cy="8" r="4.5" fill="#d8ecff"/><path d="M10 6a2.5 2 0 1 0-2 2 2.5 2 0 1 1-2 2" stroke="#3a78c8" stroke-width="1.6" fill="none"/></svg>
<svg style="position:absolute;left:735.90px;top:72.40px;width:5.20px;height:5.80px;" viewBox="0 0 16 16" preserveAspectRatio="none"><path d="M2 16V6h7M2 10h5" stroke="#4a6ab0" stroke-width="3" fill="none"/><path d="M11 0v6M9 2h4" stroke="#8ab0e8" stroke-width="1.5"/></svg>
<i class="tbi" style="left:746.00px;top:73.40px;width:3.80px;height:3.80px;background:#3fb455;border-radius:50%"></i>
<svg style="position:absolute;left:755.50px;top:72.40px;width:5.90px;height:5.80px;" viewBox="0 0 16 16" preserveAspectRatio="none"><path d="M2 16V6h7M2 10h5" stroke="#4a6ab0" stroke-width="3" fill="none"/><path d="M11 0v6M9 2h4" stroke="#8ab0e8" stroke-width="1.5"/></svg>
<i class="vm" style="left:767.90px;top:72.40px"></i><i class="mn" style="left:776.00px;top:73.40px"></i><i class="mx" style="left:786.30px;top:73.50px"></i>
<svg style="position:absolute;left:671.00px;top:82.40px;width:4.80px;height:5.20px;" viewBox="0 0 16 16" preserveAspectRatio="none"><rect x="0" y="0" width="16" height="16" fill="#8a8058"/><rect x="1" y="1" width="6" height="6" fill="#dcd39a"/><rect x="9" y="1" width="6" height="6" fill="#dcd39a"/><rect x="1" y="9" width="6" height="6" fill="#dcd39a"/><rect x="9" y="9" width="6" height="6" fill="#dcd39a"/></svg>
<div class="otx" style="left:680.6px;top:80.8px"><span style="color:#e4e4e4">com.github.eclipsecolortheme</span></div>
<i class="arr" style="left:665.6px;top:92.0px;border-left:2px solid transparent;border-right:2px solid transparent;border-top:3px solid #8a8a8a"></i>
<svg style="position:absolute;left:669.80px;top:90.40px;width:6.50px;height:6.00px;" viewBox="0 0 16 16" preserveAspectRatio="none"><circle cx="8" cy="8" r="7.5" fill="#2f8a3e"/><circle cx="8" cy="8" r="6.2" fill="#55b865"/><path d="M11 5.5a3.6 3.6 0 1 0 0 5" stroke="#f0fff0" stroke-width="2.2" fill="none"/></svg>
<div class="otx" style="left:680.6px;top:88.9px"><span style="color:#e4e4e4">ColorThemeSemanticHighlightingMapping</span></div>
<svg style="position:absolute;left:680.00px;top:99.10px;width:3.60px;height:3.60px;" viewBox="0 0 16 16" preserveAspectRatio="none"><path d="M8 0l2.4 5.4L16 6l-4.2 3.8L13 16l-5-3-5 3 1.2-6.2L0 6l5.6-.6z" fill="#e8c868"/></svg>
<div class="otx" style="left:687.6px;top:97.0px"><span style="color:#e4e4e4">separator</span><span style="color:#9c8456"> : String</span></div>
<svg style="position:absolute;left:679.20px;top:107.70px;width:4.00px;height:4.00px;" viewBox="0 0 16 16" preserveAspectRatio="none"><circle cx="8" cy="8" r="7.5" fill="#3a8a48"/><circle cx="8" cy="8" r="6" fill="#6cc07a"/></svg>
<svg style="position:absolute;left:683.80px;top:105.80px;width:2.60px;height:2.60px;" viewBox="0 0 16 16" preserveAspectRatio="none"><path d="M13 3a6 6 0 1 0 0 10" stroke="#7ad088" stroke-width="4" fill="none"/></svg>
<div class="otx" style="left:687.6px;top:105.1px"><span style="color:#e4e4e4">ColorThemeSemanticHighlightingMapping(String, String)</span></div>
<svg style="position:absolute;left:679.20px;top:115.80px;width:4.00px;height:4.00px;" viewBox="0 0 16 16" preserveAspectRatio="none"><circle cx="8" cy="8" r="7.5" fill="#3a8a48"/><circle cx="8" cy="8" r="6" fill="#6cc07a"/></svg>
<div class="otx" style="left:687.6px;top:113.2px"><span style="color:#e4e4e4">setSeparator(String)</span><span style="color:#9c8456"> : void</span></div>
<div class="sel" style="left:661.00px;top:121.90px;width:132.30px;height:7.60px;"></div>
<svg style="position:absolute;left:679.20px;top:123.90px;width:4.00px;height:4.00px;" viewBox="0 0 16 16" preserveAspectRatio="none"><circle cx="8" cy="8" r="7.5" fill="#3a8a48"/><circle cx="8" cy="8" r="6" fill="#6cc07a"/></svg>
<i class="tbi" style="left:683.60px;top:125.60px;width:3.00px;height:2.40px;background:#7a8ec8;clip-path:polygon(50% 0,100% 100%,0 100%)"></i>
<div class="otx" style="left:687.6px;top:121.3px"><span style="color:#222">putPreferences(IEclipsePreferences, ColorThemeSetting) : void</span></div>
<svg style="position:absolute;left:679.20px;top:132.00px;width:4.00px;height:4.00px;" viewBox="0 0 16 16" preserveAspectRatio="none"><circle cx="8" cy="8" r="7.5" fill="#3a8a48"/><circle cx="8" cy="8" r="6" fill="#6cc07a"/></svg>
<i class="tbi" style="left:683.60px;top:133.70px;width:3.00px;height:2.40px;background:#7a8ec8;clip-path:polygon(50% 0,100% 100%,0 100%)"></i>
<div class="otx" style="left:687.6px;top:129.4px"><span style="color:#e4e4e4">removePreferences(IEclipsePreferences) : void</span></div>
</div>
<div class="layer" style="clip-path:inset(403px 42px 69px 233px)">
<div class="tabbg" style="left:234.00px;top:403.80px;width:44.70px;height:10.20px;"></div>
<svg style="position:absolute;left:234.90px;top:404.60px;width:6.60px;height:7.40px;" viewBox="0 0 16 16" preserveAspectRatio="none"><path d="M3 0.5h11v12H3z" fill="#f4f4f4" stroke="#b8b8c8"/><path d="M6 3l4 4M10 3L6 7" stroke="#d83838" stroke-width="2"/><path d="M5 9h7" stroke="#a0a0b0"/><path d="M0 16l4-8 4 8z" fill="#e8b840"/></svg>
<div class="tab" style="left:244.4px;top:405px">Problems</div>
<svg style="position:absolute;left:272.40px;top:407.50px;width:3.80px;height:3.40px;" viewBox="0 0 16 16" preserveAspectRatio="none"><path d="M2 2L14 14M14 2L2 14" stroke="#e4e4e4" stroke-width="2.6"/></svg>
<svg style="position:absolute;left:283.20px;top:405.60px;width:4.80px;height:5.60px;" viewBox="0 0 16 16" preserveAspectRatio="none"><circle cx="8" cy="8" r="7" fill="#6a98d8"/><circle cx="8" cy="8" r="3" fill="#dce8f8"/><path d="M11 5v5q0 2 2 1" stroke="#dce8f8" stroke-width="1.6" fill="none"/></svg>
<div class="tab" style="left:290px;top:405px;color:#dcdcdc">Javadoc</div>
<svg style="position:absolute;left:315.60px;top:404.80px;width:5.40px;height:7.20px;" viewBox="0 0 16 16" preserveAspectRatio="none"><path d="M1 0.5h9l4 4V15.5H1z" fill="#e2e8f0" stroke="#98a8c0"/><path d="M3 5h7M3 8h7" stroke="#8aa0c0"/><path d="M6 10h10v6H6z" fill="#f0b838"/></svg>
<div class="tab" style="left:323.4px;top:405px;color:#dcdcdc">Declaration</div>
<svg style="position:absolute;left:359.00px;top:405.60px;width:5.60px;height:5.80px;" viewBox="0 0 16 16" preserveAspectRatio="none"><rect x="0.5" y="0.5" width="15" height="13" fill="#cfe0f8"/><rect x="2.5" y="3" width="11" height="8.5" fill="#3a6ac0"/><path d="M4 6h5" stroke="#cfe0f8" stroke-width="1.4"/></svg>
<div class="tab" style="left:366.9px;top:405px;color:#dcdcdc">Console</div>
<i class="vm" style="left:768.40px;top:406.40px"></i><i class="mn" style="left:776.50px;top:407.40px"></i><i class="mx" style="left:786.50px;top:407.50px"></i>
<div class="r" style="left:238.7px;top:415.2px;font-size:6.1px;line-height:8px;color:#161616;white-space:nowrap;-webkit-text-stroke:0.2px #161616">0 errors, 5 warnings, 0 others</div>
<div class="r" style="left:237.70px;top:423.00px;width:555.10px;height:7.90px;background:linear-gradient(#ffffff,#e9e9e9)"></div>
<div class="r" style="left:237.70px;top:423.00px;width:156.60px;height:7.90px;background:linear-gradient(#c4def8,#86bceb)"></div>
<i class="tbi" style="left:390.00px;top:425.20px;width:3.00px;height:2.40px;background:#5a7a9a;clip-path:polygon(50% 0,100% 100%,0 100%)"></i>
<div class="r" style="left:238.7px;top:423px;font-size:5.7px;line-height:8px;color:#1a2a3a;white-space:nowrap">Description</div>
<div class="r" style="left:395.7px;top:423px;font-size:5.7px;line-height:8px;color:#1a2a3a;white-space:nowrap">Resource</div>
<div class="r" style="left:443.6px;top:423px;font-size:5.7px;line-height:8px;color:#1a2a3a;white-space:nowrap">Path</div>
<div class="r" style="left:506.2px;top:423px;font-size:5.7px;line-height:8px;color:#1a2a3a;white-space:nowrap">Location</div>
<div class="r" style="left:553px;top:423px;font-size:5.7px;line-height:8px;color:#1a2a3a;white-space:nowrap">Type</div>
<i class="colsep" style="left:394.10px;top:430.90px;width:0.90px;height:77.60px;"></i>
<i class="colsep" style="left:394.10px;top:423.00px;width:0.90px;height:7.90px;background:#c4c4c4"></i>
<i class="colsep" style="left:441.50px;top:430.90px;width:0.90px;height:77.60px;"></i>
<i class="colsep" style="left:441.50px;top:423.00px;width:0.90px;height:7.90px;background:#c4c4c4"></i>
<i class="colsep" style="left:504.70px;top:430.90px;width:0.90px;height:77.60px;"></i>
<i class="colsep" style="left:504.70px;top:423.00px;width:0.90px;height:7.90px;background:#c4c4c4"></i>
<i class="colsep" style="left:552.00px;top:430.90px;width:0.90px;height:77.60px;"></i>
<i class="colsep" style="left:552.00px;top:423.00px;width:0.90px;height:7.90px;background:#c4c4c4"></i>
<i class="colsep" style="left:599.20px;top:430.90px;width:0.90px;height:77.60px;"></i>
<i class="colsep" style="left:599.20px;top:423.00px;width:0.90px;height:7.90px;background:#c4c4c4"></i>
<i class="arr" style="left:241.3px;top:434.3px;border-left:2px solid transparent;border-right:2px solid transparent;border-top:3px solid #8a8a8a"></i>
<svg style="position:absolute;left:247.20px;top:431.80px;width:5.20px;height:6.60px;" viewBox="0 0 16 16" preserveAspectRatio="none"><path d="M4 7V4a4 4 0 0 1 8 0v3" stroke="#e8c060" stroke-width="2" fill="none"/><rect x="1" y="7" width="14" height="9" rx="1.5" fill="#e9b845"/><rect x="2" y="8" width="12" height="3" fill="#f8e090"/></svg>
<div class="ptx" style="left:253.9px;top:431.4px">Warnings (5 items)</div>
<svg style="position:absolute;left:254.30px;top:440.20px;width:5.40px;height:6.40px;" viewBox="0 0 16 16" preserveAspectRatio="none"><path d="M2 0.5h8l4 4V15.5H2z" fill="#efe2b8" stroke="#b89a58"/><path d="M4 5h6M4 8h7" stroke="#b8a070"/><path d="M6 16l4.5-8L15 16z" fill="#e8b030"/></svg>
<div class="ptx" style="left:261.4px;top:439.4px">Build path specifies execution environment J...</div>
<div class="ptx" style="left:395.7px;top:439.4px">com.github.e...</div>
<div class="ptx" style="left:506.2px;top:439.4px">Build path</div>
<div class="ptx" style="left:553px;top:439.4px">JRE System Li...</div>
<svg style="position:absolute;left:254.30px;top:448.25px;width:5.40px;height:6.40px;" viewBox="0 0 16 16" preserveAspectRatio="none"><path d="M2 0.5h8l4 4V15.5H2z" fill="#efe2b8" stroke="#b89a58"/><path d="M4 5h6M4 8h7" stroke="#b8a070"/><path d="M6 16l4.5-8L15 16z" fill="#e8b030"/></svg>
<div class="ptx" style="left:261.4px;top:447.4px">Build path specifies execution environment J...</div>
<div class="ptx" style="left:395.7px;top:447.4px">com.github.e...</div>
<div class="ptx" style="left:506.2px;top:447.4px">Build path</div>
<div class="ptx" style="left:553px;top:447.4px">JRE System Li...</div>
<svg style="position:absolute;left:254.30px;top:456.30px;width:5.40px;height:6.40px;" viewBox="0 0 16 16" preserveAspectRatio="none"><path d="M2 0.5h8l4 4V15.5H2z" fill="#efe2b8" stroke="#b89a58"/><path d="M4 5h6M4 8h7" stroke="#b8a070"/><path d="M6 16l4.5-8L15 16z" fill="#e8b030"/></svg>
<div class="ptx" style="left:261.4px;top:455.5px">Resource leak: 'in' is never closed</div>
<div class="ptx" style="left:395.7px;top:455.5px">ColorThemeP...</div>
<div class="ptx" style="left:444px;top:455.5px">/com.github.eclips...</div>
<div class="ptx" style="left:506.2px;top:455.5px">line 269</div>
<div class="ptx" style="left:553px;top:455.5px">Java Problem</div>
<svg style="position:absolute;left:254.30px;top:464.35px;width:5.40px;height:6.40px;" viewBox="0 0 16 16" preserveAspectRatio="none"><path d="M2 0.5h8l4 4V15.5H2z" fill="#efe2b8" stroke="#b89a58"/><path d="M4 5h6M4 8h7" stroke="#b8a070"/><path d="M6 16l4.5-8L15 16z" fill="#e8b030"/></svg>
<div class="ptx" style="left:261.4px;top:463.5px">The constructor InstanceScope() is deprecated</div>
<div class="ptx" style="left:395.7px;top:463.5px">ThemePrefer...</div>
<div class="ptx" style="left:444px;top:463.5px">/com.github.eclips...</div>
<div class="ptx" style="left:506.2px;top:463.5px">line 41</div>
<div class="ptx" style="left:553px;top:463.5px">Java Problem</div>
<svg style="position:absolute;left:254.30px;top:472.40px;width:5.40px;height:6.40px;" viewBox="0 0 16 16" preserveAspectRatio="none"><path d="M2 0.5h8l4 4V15.5H2z" fill="#efe2b8" stroke="#b89a58"/><path d="M4 5h6M4 8h7" stroke="#b8a070"/><path d="M6 16l4.5-8L15 16z" fill="#e8b030"/></svg>
<div class="ptx" style="left:261.4px;top:471.6px">There is no 'jre.compilation.profile' build en...</div>
<div class="ptx" style="left:395.7px;top:471.6px">build.properties</div>
<div class="ptx" style="left:444px;top:471.6px">/com.github.eclips...</div>
<div class="ptx" style="left:506.2px;top:471.6px">line 1</div>
<div class="ptx" style="left:553px;top:471.6px">Plug-in Problem</div>
</div>
</body></html>
